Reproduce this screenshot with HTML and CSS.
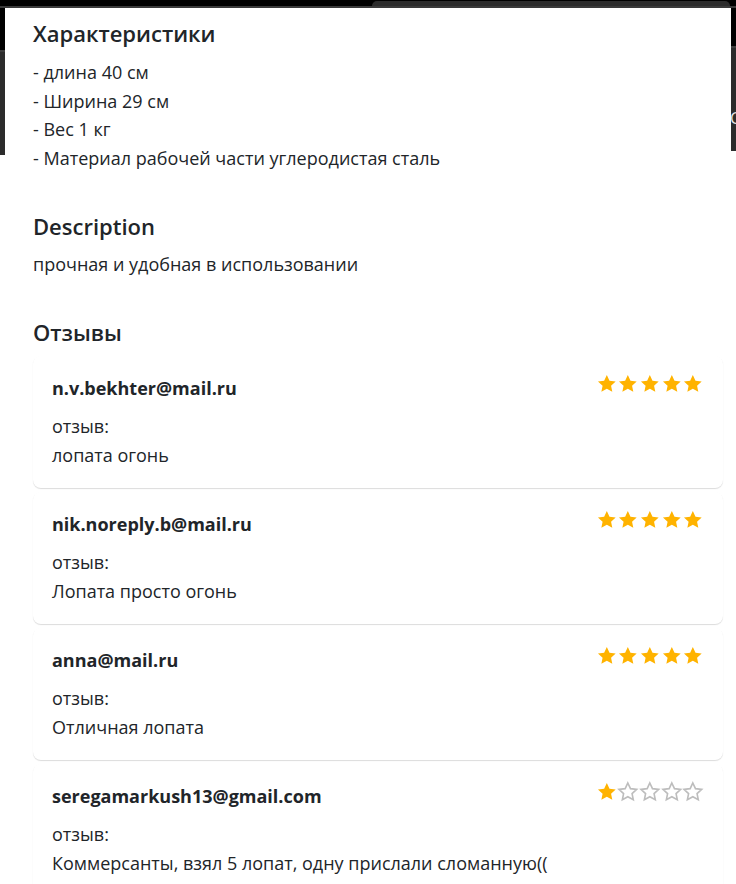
FILE: index.html
```html
<!DOCTYPE html>
<html lang="ru">
<head>
<meta charset="utf-8">
<title>Лопата</title>
<link rel="stylesheet" href="styles.css">
</head>
<body>
<svg class="defs" width="0" height="0" aria-hidden="true">
  <defs>
    <path id="star" d="M12 2.2l2.95 6.3 6.85.8-5.1 4.7 1.35 6.8L12 17.4l-6.05 3.4 1.35-6.8-5.1-4.7 6.85-.8z"/>
  </defs>
</svg>
<div class="backdrop-top"><div class="tab"></div></div>
<div class="layout">
  <div class="edge edge-left"><div class="edge-black"></div><div class="edge-gray"></div></div>
  <main class="panel">
    <section class="block">
      <h4 class="title">Характеристики</h4>
      <div class="specs">
        <div>- длина 40 см</div>
        <div>- Ширина 29 см</div>
        <div>- Вес 1 кг</div>
        <div>- Материал рабочей части углеродистая сталь</div>
      </div>
    </section>
    <section class="block block-desc">
      <h4 class="title">Description</h4>
      <p class="desc">прочная и удобная в использовании</p>
    </section>
    <section class="block block-reviews">
      <h4 class="title">Отзывы</h4>
      <div class="reviews">
        <article class="review">
          <div class="review-head">
            <span class="author">n.v.bekhter@mail.ru</span>
            <span class="stars">
              <svg class="star full" viewBox="0 0 24 24"><use href="#star"/></svg><svg class="star full" viewBox="0 0 24 24"><use href="#star"/></svg><svg class="star full" viewBox="0 0 24 24"><use href="#star"/></svg><svg class="star full" viewBox="0 0 24 24"><use href="#star"/></svg><svg class="star full" viewBox="0 0 24 24"><use href="#star"/></svg>
            </span>
          </div>
          <div class="review-body">
            <div>отзыв:</div>
            <div>лопата огонь</div>
          </div>
        </article>
        <article class="review">
          <div class="review-head">
            <span class="author">nik.noreply.b@mail.ru</span>
            <span class="stars">
              <svg class="star full" viewBox="0 0 24 24"><use href="#star"/></svg><svg class="star full" viewBox="0 0 24 24"><use href="#star"/></svg><svg class="star full" viewBox="0 0 24 24"><use href="#star"/></svg><svg class="star full" viewBox="0 0 24 24"><use href="#star"/></svg><svg class="star full" viewBox="0 0 24 24"><use href="#star"/></svg>
            </span>
          </div>
          <div class="review-body">
            <div>отзыв:</div>
            <div>Лопата просто огонь</div>
          </div>
        </article>
        <article class="review">
          <div class="review-head">
            <span class="author">anna@mail.ru</span>
            <span class="stars">
              <svg class="star full" viewBox="0 0 24 24"><use href="#star"/></svg><svg class="star full" viewBox="0 0 24 24"><use href="#star"/></svg><svg class="star full" viewBox="0 0 24 24"><use href="#star"/></svg><svg class="star full" viewBox="0 0 24 24"><use href="#star"/></svg><svg class="star full" viewBox="0 0 24 24"><use href="#star"/></svg>
            </span>
          </div>
          <div class="review-body">
            <div>отзыв:</div>
            <div>Отличная лопата</div>
          </div>
        </article>
        <article class="review">
          <div class="review-head">
            <span class="author">seregamarkush13@gmail.com</span>
            <span class="stars">
              <svg class="star full" viewBox="0 0 24 24"><use href="#star"/></svg><svg class="star empty" viewBox="0 0 24 24"><use href="#star"/></svg><svg class="star empty" viewBox="0 0 24 24"><use href="#star"/></svg><svg class="star empty" viewBox="0 0 24 24"><use href="#star"/></svg><svg class="star empty" viewBox="0 0 24 24"><use href="#star"/></svg>
            </span>
          </div>
          <div class="review-body">
            <div>отзыв:</div>
            <div>Коммерсанты, взял 5 лопат, одну прислали сломанную((</div>
          </div>
        </article>
      </div>
    </section>
  </main>
  <div class="edge edge-right"><div class="edge-black short"></div><div class="edge-gray"><span class="edge-glyph">C</span></div></div>
</div>
</body>
</html>
```
FILE: styles.css
```css
* { box-sizing: border-box; }

html, body {
  margin: 0;
  padding: 0;
  background: #ffffff;
  overflow: hidden;
}

body {
  width: 736px;
  height: 884px;
  font-family: "Open Sans", "Noto Sans", sans-serif;
  color: #212529;
}

.defs { position: absolute; width: 0; height: 0; }

.backdrop-top {
  height: 8px;
  background: #000;
  border-bottom: 2px solid #3a3a3a;
  display: flex;
}

.tab {
  margin-left: 372px;
  margin-top: 1px;
  width: 358px;
  background: #2b2b2b;
  border-radius: 14px 14px 0 0;
}

.layout {
  display: flex;
  align-items: flex-start;
}

.edge {
  width: 5px;
  flex: none;
  display: flex;
  flex-direction: column;
}

.edge-black { height: 42px; background: #000; }
.edge-black.short { height: 38px; }
.edge-gray {
  height: 105px;
  background: #2c2c2c;
  border-top: 2px solid #3d3d3d;
  overflow: hidden;
  display: flex;
  align-items: center;
}

.edge-glyph {
  color: #e8e8e8;
  font-size: 16px;
  line-height: 1;
  margin-top: 36px;
  margin-left: -1px;
}

.panel {
  flex: 1;
  background: #fff;
  padding: 12px 8px 0 28px;
  min-height: 876px;
}

.title {
  margin: 0;
  font-size: 22px;
  font-weight: 600;
  line-height: 26px;
}

.specs {
  margin-top: 12px;
  font-size: 18px;
  line-height: 28.7px;
}

.block-desc { margin-top: 40px; }

.desc {
  margin: 13px 0 0;
  font-size: 18px;
  line-height: 24px;
}

.block-reviews { margin-top: 43px; }

.reviews {
  margin-top: 11px;
  display: flex;
  flex-direction: column;
  gap: 4px;
}

.review {
  background: #fff;
  border-radius: 8px;
  box-shadow: 0 1px 1px rgba(0, 0, 0, 0.14);
  padding: 20px 19px 18px 19px;
}

.review-head {
  display: flex;
  justify-content: space-between;
  align-items: flex-start;
}

.author {
  font-weight: 700;
  font-size: 18px;
  line-height: 24px;
}

.stars {
  display: flex;
  margin-top: -2.4px;
}

.star {
  width: 21.67px;
  height: 21.67px;
  display: block;
}

.star.full { fill: #ffb300; }
.star.empty { fill: none; stroke: #bdbdbd; stroke-width: 1.8; }

.review-body {
  margin-top: 12px;
  font-size: 18px;
  line-height: 29px;
}
```
